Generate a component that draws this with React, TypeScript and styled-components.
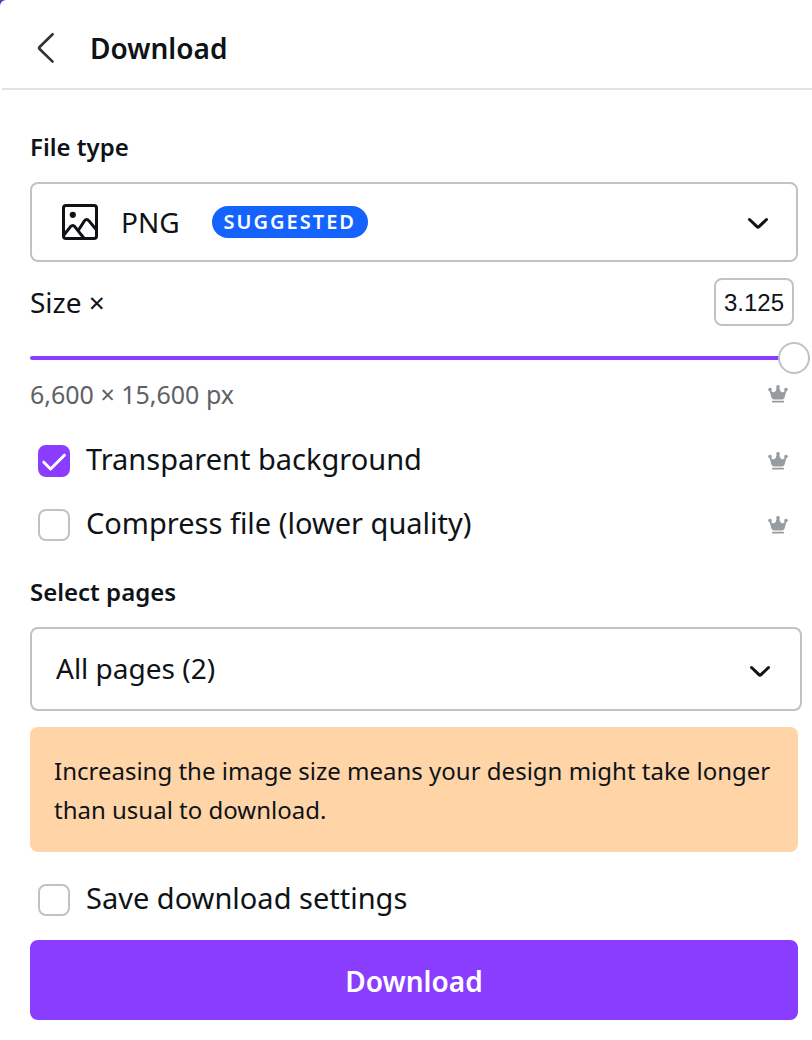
import React, { useState } from "react";
import styled, { createGlobalStyle } from "styled-components";

const purple = "#8b3dff";
const ink = "#0e1318";
const line = "#bdc3c8";
const fonts = `"Noto Sans", "Open Sans", sans-serif`;

const GlobalStyle = createGlobalStyle`
  *, *::before, *::after { box-sizing: border-box; }
  body { margin: 0; background: #5a32c8; color: ${ink}; font-family: ${fonts}; }
  button, input, select { font-family: inherit; color: inherit; margin: 0; }
`;

const Panel = styled.main`
  min-height: 100vh;
  background: #fff;
  border-top-left-radius: 6px;
`;

const Header = styled.header`
  display: flex;
  align-items: center;
  gap: 28px;
  height: 90px;
  margin-left: 2px;
  padding: 8px 28px 0;
  border-bottom: 2px solid #dfe3e6;
`;

const BackButton = styled.button`
  display: flex;
  padding: 0 4px;
  border: 0;
  background: none;
  cursor: pointer;
`;

const Title = styled.h1`
  margin: 0;
  font-size: 28px;
  line-height: 40px;
  font-weight: 600;
`;

const Form = styled.form`
  display: flex;
  flex-direction: column;
  padding: 41px 14px 20px 30px;
`;

const FieldLabel = styled.label`
  font-size: 24px;
  line-height: 32px;
  font-weight: 600;
  margin-bottom: 19px;
`;

const TypeButton = styled.button`
  display: flex;
  align-items: center;
  height: 80px;
  padding: 0 26px 0 30px;
  border: 2px solid ${line};
  border-radius: 8px;
  background: #fff;
  font-size: 28px;
  line-height: 40px;
  text-align: left;
  cursor: pointer;
`;

const TypeName = styled.span`
  margin-left: 23px;
`;

const Badge = styled.span`
  margin: 0 auto 0 32px;
  padding: 0 12px;
  border-radius: 16px;
  background: #1463ff;
  color: #fff;
  font-size: 20px;
  line-height: 32px;
  font-weight: 600;
  letter-spacing: 2px;
`;

const SizeRow = styled.div`
  display: flex;
  align-items: center;
  justify-content: space-between;
  margin: 16px 4px 16px 0;
  font-size: 28px;
  line-height: 40px;
`;

const SizeInput = styled.input`
  width: 80px;
  height: 48px;
  padding: 2px 0 0;
  border: 2px solid ${line};
  border-radius: 8px;
  background: #fff;
  font-family: "Liberation Sans", sans-serif;
  font-size: 24px;
  text-align: center;
`;

const Slider = styled.input`
  appearance: none;
  display: block;
  height: 32px;
  margin: 0 -12px 0 0;
  background: none;
  cursor: pointer;

  &::-webkit-slider-runnable-track {
    height: 4px;
    border-radius: 2px;
    background: ${purple};
  }
  &::-webkit-slider-thumb {
    appearance: none;
    width: 32px;
    height: 32px;
    margin-top: -14px;
    border: 2px solid ${line};
    border-radius: 50%;
    background: #fff;
  }
`;

const Dimensions = styled.div`
  display: flex;
  align-items: center;
  justify-content: space-between;
  margin: 4px 0 19px;
  padding-right: 10px;
  color: #5d6266;
  font-size: 25px;
  line-height: 32px;
`;

const Options = styled.div`
  margin-bottom: 19px;
`;

const OptionRow = styled.div<{ $compact?: boolean }>`
  display: flex;
  align-items: center;
  justify-content: space-between;
  height: ${(p) => (p.$compact ? 48 : 64)}px;
  padding: 0 10px 0 8px;
`;

const OptionLabel = styled.label`
  display: flex;
  align-items: center;
  gap: 16px;
  font-size: 29px;
  line-height: 40px;
  cursor: pointer;
`;

const OptionText = styled.span`
  padding-bottom: 4px;
`;

const Box = styled.span`
  position: relative;
  display: flex;

  svg {
    position: absolute;
    inset: 0;
    pointer-events: none;
  }
`;

const Tick = styled.input`
  appearance: none;
  width: 32px;
  height: 32px;
  border: 2px solid ${line};
  border-radius: 8px;
  background: #fff;

  &:checked {
    border-color: ${purple};
    background: ${purple};
  }
`;

const SelectWrap = styled.div`
  position: relative;
  margin-right: -4px;

  svg {
    position: absolute;
    right: 30px;
    top: 31px;
    pointer-events: none;
  }
`;

const PagesSelect = styled.select`
  appearance: none;
  display: block;
  width: 100%;
  height: 84px;
  padding: 0 64px 2px 24px;
  border: 2px solid ${line};
  border-radius: 8px;
  background: #fff;
  font-size: 28px;
`;

const Notice = styled.p`
  margin: 16px 0 24px;
  padding: 24px 24px 23px;
  border-radius: 8px;
  background: #ffd5a8;
  font-size: 24px;
  line-height: 39px;
`;

const DownloadButton = styled.button`
  height: 80px;
  margin-top: 16px;
  padding: 2px 0 0;
  border: 0;
  border-radius: 8px;
  background: ${purple};
  color: #fff;
  font-size: 28px;
  font-weight: 600;
  cursor: pointer;
`;

const Chevron = () => (
  <svg width="24" height="24" viewBox="0 0 24 24" fill="none" stroke={ink} strokeWidth="3" strokeLinecap="round" strokeLinejoin="round" aria-hidden="true">
    <path d="M3.5 9.5 L11 16.7 Q12 17.6 13 16.7 L20.5 9.5" />
  </svg>
);

const Crown = () => (
  <svg width="20" height="20" viewBox="0 0 20 20" fill="#979ca1" role="img" aria-label="Pro feature">
    <circle cx="2" cy="5.6" r="1.8" />
    <circle cx="10" cy="2.8" r="1.8" />
    <circle cx="18" cy="5.6" r="1.8" />
    <path d="M1.4 6 L3.4 13.6 Q3.9 15.4 5.6 15.4 H14.4 Q16.1 15.4 16.6 13.6 L18.6 6 L17 6.4 Q15.6 8.8 13.8 8.2 Q11.8 7.4 11.2 3.6 H8.8 Q8.2 7.4 6.2 8.2 Q4.4 8.8 3 6.4 Z" />
    <rect x="4" y="16.7" width="12" height="1.9" rx="0.6" />
  </svg>
);

const Picture = () => (
  <svg width="36" height="36" viewBox="1 1 36 36" fill="none" stroke={ink} strokeWidth="3" aria-hidden="true">
    <rect x="2.5" y="2.5" width="33" height="33" rx="2.5" />
    <circle cx="11.8" cy="11.8" r="3.1" fill={ink} stroke="none" />
    <path d="M2.5 32.5 L9.6 23.6 Q11.7 21.2 13.8 23.6 L23.2 35.5" />
    <path d="M17.4 27.2 L23.4 17.9 Q25.6 15 28 17.9 L35.5 27" />
  </svg>
);

type OptionProps = {
  label: string;
  defaultChecked?: boolean;
  pro?: boolean;
  compact?: boolean;
};

function Option({ label, defaultChecked = false, pro, compact }: OptionProps) {
  const [checked, setChecked] = useState(defaultChecked);
  return (
    <OptionRow $compact={compact}>
      <OptionLabel>
        <Box>
          <Tick type="checkbox" checked={checked} onChange={(e) => setChecked(e.target.checked)} />
          {checked && (
            <svg width="32" height="32" viewBox="0 0 32 32" fill="none" stroke="#fff" strokeWidth="3" strokeLinecap="round" strokeLinejoin="round" aria-hidden="true">
              <path d="M5.8 17.2 L12.6 24 L26.4 10.2" />
            </svg>
          )}
        </Box>
        <OptionText>{label}</OptionText>
      </OptionLabel>
      {pro && <Crown />}
    </OptionRow>
  );
}

export default function App() {
  const [size, setSize] = useState("3.125");
  return (
    <>
      <GlobalStyle />
      <Panel>
        <Header>
          <BackButton type="button" aria-label="Back">
            <svg width="24" height="32" viewBox="0 0 24 32" fill="none" stroke="#303336" strokeWidth="2.6" strokeLinecap="round" strokeLinejoin="round" aria-hidden="true">
              <path d="M18.6 2.2 L5.6 15 Q4.6 16 5.6 17 L18.6 29.6" />
            </svg>
          </BackButton>
          <Title>Download</Title>
        </Header>
        <Form onSubmit={(e) => e.preventDefault()}>
          <FieldLabel htmlFor="file-type">File type</FieldLabel>
          <TypeButton id="file-type" type="button" aria-haspopup="listbox">
            <Picture />
            <TypeName>PNG</TypeName>
            <Badge>SUGGESTED</Badge>
            <Chevron />
          </TypeButton>
          <SizeRow>
            <label htmlFor="size">Size ×</label>
            <SizeInput id="size" type="text" inputMode="decimal" value={size} onChange={(e) => setSize(e.target.value)} />
          </SizeRow>
          <Slider type="range" aria-label="Size" min="0.5" max="3.125" step="0.125" value={size} onChange={(e) => setSize(e.target.value)} />
          <Dimensions>
            <span>6,600 × 15,600 px</span>
            <Crown />
          </Dimensions>
          <Options>
            <Option label="Transparent background" defaultChecked pro />
            <Option label="Compress file (lower quality)" pro />
          </Options>
          <FieldLabel htmlFor="pages">Select pages</FieldLabel>
          <SelectWrap>
            <PagesSelect id="pages" defaultValue="all">
              <option value="all">All pages (2)</option>
            </PagesSelect>
            <Chevron />
          </SelectWrap>
          <Notice>
            Increasing the image size means your design might take longer than usual to download.
          </Notice>
          <Option label="Save download settings" compact />
          <DownloadButton type="submit">Download</DownloadButton>
        </Form>
      </Panel>
    </>
  );
}
